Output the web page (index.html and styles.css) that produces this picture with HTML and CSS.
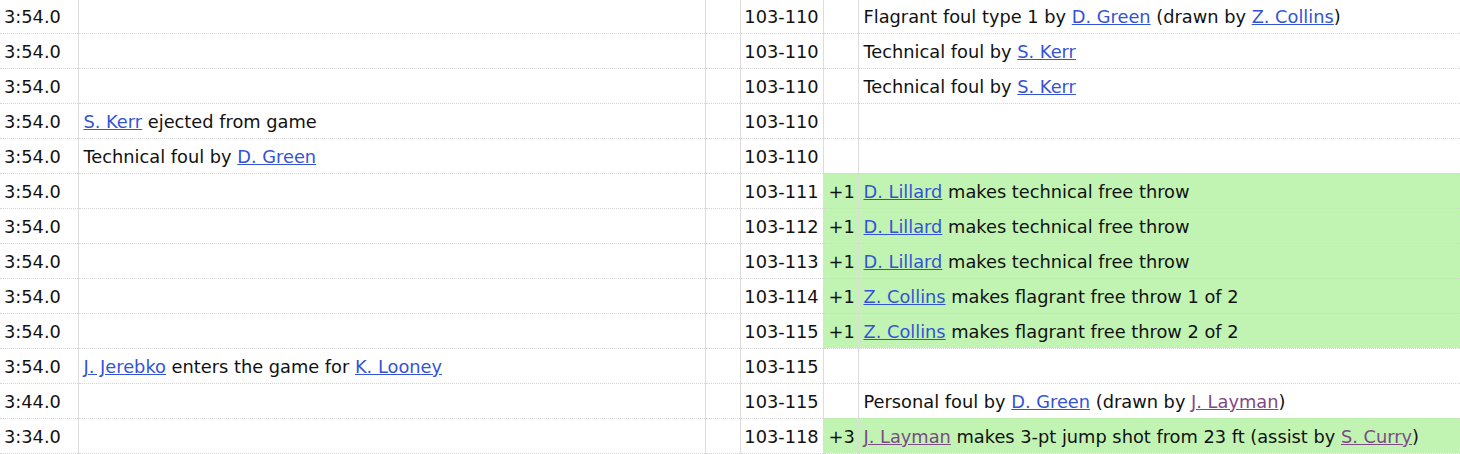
FILE: index.html
```html
<!DOCTYPE html>
<html>
<head>
<meta charset="utf-8">
<link rel="stylesheet" href="styles.css">
</head>
<body>
<table class="pbp">
  <colgroup>
    <col class="c-time"><col class="c-away"><col class="c-apts"><col class="c-score"><col class="c-hpts"><col class="c-home">
  </colgroup>
  <tbody>
    <tr><td>3:54.0</td><td></td><td></td><td class="score">103-110</td><td></td><td>Flagrant foul type 1 by <a href="#">D. Green</a> (drawn by <a href="#">Z. Collins</a>)</td></tr>
    <tr><td>3:54.0</td><td></td><td></td><td class="score">103-110</td><td></td><td>Technical foul by <a href="#">S. Kerr</a></td></tr>
    <tr><td>3:54.0</td><td></td><td></td><td class="score">103-110</td><td></td><td>Technical foul by <a href="#">S. Kerr</a></td></tr>
    <tr><td>3:54.0</td><td><a href="#">S. Kerr</a> ejected from game</td><td></td><td class="score">103-110</td><td></td><td></td></tr>
    <tr><td>3:54.0</td><td>Technical foul by <a href="#">D. Green</a></td><td></td><td class="score">103-110</td><td></td><td></td></tr>
    <tr><td>3:54.0</td><td></td><td></td><td class="score">103-111</td><td class="made">+1</td><td class="made"><a href="#">D. Lillard</a> makes technical free throw</td></tr>
    <tr><td>3:54.0</td><td></td><td></td><td class="score">103-112</td><td class="made">+1</td><td class="made"><a href="#">D. Lillard</a> makes technical free throw</td></tr>
    <tr><td>3:54.0</td><td></td><td></td><td class="score">103-113</td><td class="made">+1</td><td class="made"><a href="#">D. Lillard</a> makes technical free throw</td></tr>
    <tr><td>3:54.0</td><td></td><td></td><td class="score">103-114</td><td class="made">+1</td><td class="made"><a href="#">Z. Collins</a> makes flagrant free throw 1 of 2</td></tr>
    <tr><td>3:54.0</td><td></td><td></td><td class="score">103-115</td><td class="made">+1</td><td class="made"><a href="#">Z. Collins</a> makes flagrant free throw 2 of 2</td></tr>
    <tr><td>3:54.0</td><td><a href="#">J. Jerebko</a> enters the game for <a href="#">K. Looney</a></td><td></td><td class="score">103-115</td><td></td><td></td></tr>
    <tr><td>3:44.0</td><td></td><td></td><td class="score">103-115</td><td></td><td>Personal foul by <a href="#">D. Green</a> (drawn by <a class="visited" href="#">J. Layman</a>)</td></tr>
    <tr><td>3:34.0</td><td></td><td></td><td class="score">103-118</td><td class="made">+3</td><td class="made"><a class="visited" href="#">J. Layman</a> makes 3-pt jump shot from 23 ft (assist by <a class="visited" href="#">S. Curry</a>)</td></tr>
  </tbody>
</table>
</body>
</html>
```
FILE: styles.css
```css
html, body {
  margin: 0;
  padding: 0;
  background: #fff;
}
body {
  font-family: "DejaVu Sans", Verdana, sans-serif;
  font-size: 17.8px;
  color: #111;
}
.pbp {
  width: 1460px;
  border-collapse: collapse;
  table-layout: fixed;
  margin-top: -2px;
}
.c-time { width: 78px; }
.c-away { width: 627px; }
.c-apts { width: 35px; }
.c-score { width: 83px; }
.c-hpts { width: 35px; }
.c-home { width: auto; }
.pbp tr { height: 35px; }
.pbp td {
  padding: 3px 5px 0;
  border-bottom: 1px dotted #d4d4d4;
  border-right: 1px solid #dcdcdc;
  white-space: nowrap;
  vertical-align: middle;
  line-height: 22px;
}
.pbp td:first-child { padding-left: 4px; }
.pbp td:last-child { border-right: none; }
.pbp td.score { text-align: center; padding-left: 0; padding-right: 0; }
.pbp td.made { background: #c1f3b3; }
a {
  color: #3453d6;
  text-decoration: underline;
}
a.visited { color: #7d4a86; }
```
